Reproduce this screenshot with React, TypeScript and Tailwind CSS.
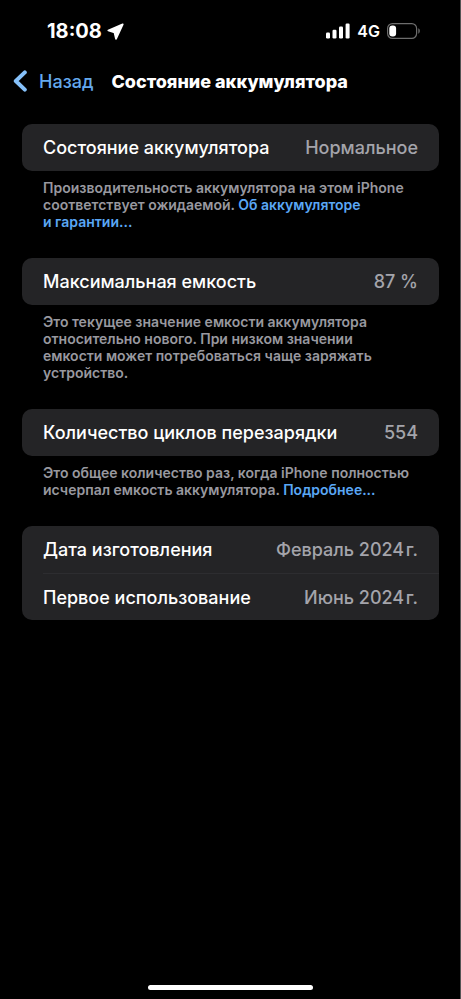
import type { ReactNode } from "react";

function Group({ children }: { children: ReactNode }) {
  return (
    <dl className="overflow-hidden rounded-[10px] bg-[#242426]">{children}</dl>
  );
}

function Row({ label, value, divided }: { label: string; value: string; divided?: boolean }) {
  return (
    <div className="pl-[21px]">
      <div
        className={
          divided
            ? "flex h-[47px] items-center justify-between border-t border-[#2d2d30] pr-[21px]"
            : "flex h-[47px] items-center justify-between pr-[21px]"
        }
      >
        <dt className="text-white">{label}</dt>
        <dd className="text-[#a4a4ab]">{value}</dd>
      </div>
    </div>
  );
}

function Note({ children }: { children: ReactNode }) {
  return (
    <p className="px-[21px] pt-2 text-[14px] leading-[17px] font-semibold text-[#98989f]">
      {children}
    </p>
  );
}

function StatusBar() {
  return (
    <div className="flex h-[62px] items-center justify-between pr-[39px] pl-[47px]">
      <div className="flex items-center gap-[5px]">
        <span className="text-[20px] leading-6 font-bold">18:08</span>
        <svg width="17" height="17" viewBox="0 0 17 17" fill="currentColor" stroke="currentColor" strokeWidth="1.8" strokeLinejoin="round">
          <path d="M15.700 1.300 1.300 7.500l6.200 2 1.500 6.300z" />
        </svg>
      </div>
      <div className="flex items-center gap-[7px]">
        <svg width="24" height="16" viewBox="0 0 24 16" fill="currentColor">
          <rect x="0" y="9.500" width="4" height="6" rx="1.200" />
          <rect x="6.500" y="6.800" width="4" height="8.700" rx="1.200" />
          <rect x="13" y="3.600" width="4" height="11.900" rx="1.200" />
          <rect x="19.600" y="0.500" width="4" height="15" rx="1.200" />
        </svg>
        <span className="text-[16px] leading-5 font-semibold">4G</span>
        <svg width="34" height="16" viewBox="0 0 34 16">
          <rect x="0.600" y="0.600" width="29" height="14.800" rx="4.800" fill="none" stroke="#6d6d6d" strokeWidth="1.200" />
          <rect x="2.300" y="2.400" width="6.800" height="11.200" rx="3" fill="#fff" />
          <path d="M31.300 5.300c2 .8 2 4.600 0 5.400z" fill="#6d6d6d" />
        </svg>
      </div>
    </div>
  );
}

export default function App() {
  return (
    <div className="flex min-h-screen flex-col border-r border-[#555555] bg-black font-['Inter',sans-serif] text-white">
      <StatusBar />
      <header className="flex h-[38px] items-center gap-[18px] px-[13px]">
        <button type="button" className="flex items-center gap-3 text-[18px] font-medium text-[#64a9ee]">
          <svg width="14" height="22" viewBox="0 0 14 22" fill="none" stroke="#86c1fa" strokeWidth="4" strokeLinecap="round" strokeLinejoin="round">
            <path d="M11.800 2.400 2.800 11l9 8.600" />
          </svg>
          Назад
        </button>
        <h1 className="text-[18px] font-extrabold whitespace-nowrap">Состояние аккумулятора</h1>
      </header>
      <main className="flex flex-col pt-6 pr-[21px] pl-[22px] text-[18px] font-medium">
        <section className="pb-7">
          <Group>
            <Row label="Состояние аккумулятора" value="Нормальное" />
          </Group>
          <Note>
            Производительность аккумулятора на этом iPhone
            <br />
            соответствует ожидаемой. <a href="#warranty" className="text-[#5aa7f5]">Об аккумуляторе<br />и гарантии...</a>
          </Note>
        </section>
        <section className="pb-7">
          <Group>
            <Row label="Максимальная емкость" value="87 %" />
          </Group>
          <Note>
            Это текущее значение емкости аккумулятора
            <br />
            относительно нового. При низком значении
            <br />
            емкости может потребоваться чаще заряжать
            <br />
            устройство.
          </Note>
        </section>
        <section className="pb-7">
          <Group>
            <Row label="Количество циклов перезарядки" value="554" />
          </Group>
          <Note>
            Это общее количество раз, когда iPhone полностью
            <br />
            исчерпал емкость аккумулятора. <a href="#cycles" className="text-[#5aa7f5]">Подробнее...</a>
          </Note>
        </section>
        <Group>
          <Row label="Дата изготовления" value={"Февраль 2024\u200Aг."} />
          <Row label="Первое использование" value={"Июнь 2024\u200Aг."} divided />
        </Group>
      </main>
      <div className="mt-auto flex justify-center pb-[9px]">
        <div className="h-[5px] w-[165px] rounded-full bg-white" />
      </div>
    </div>
  );
}
